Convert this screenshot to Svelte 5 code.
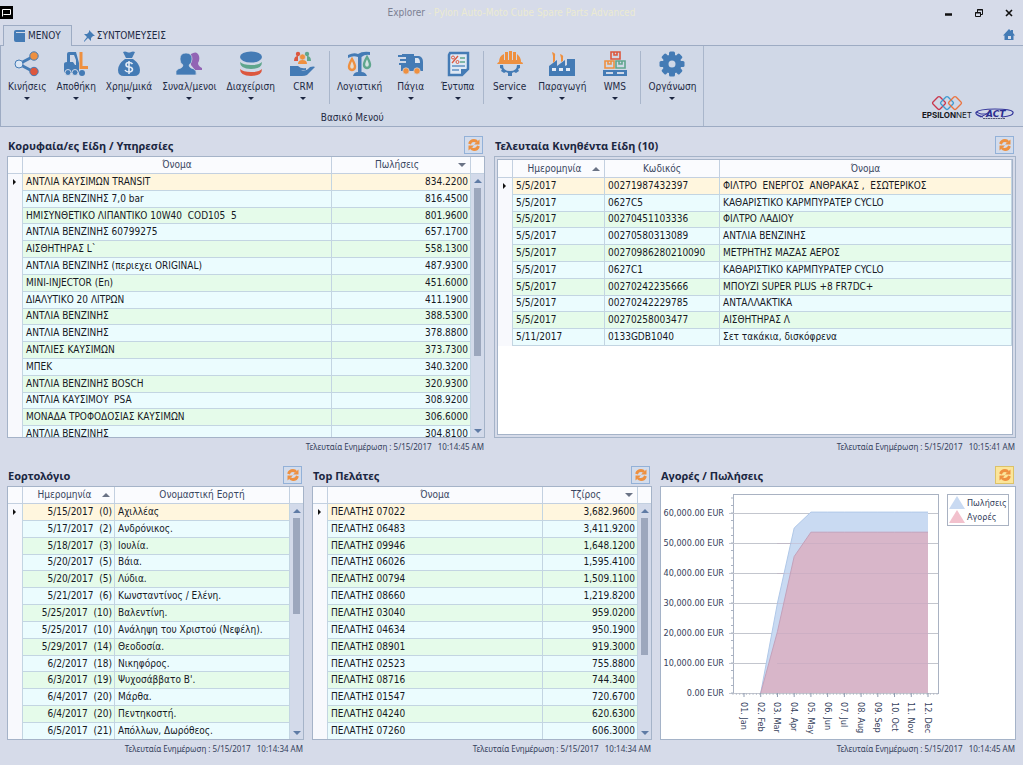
<script>
  const menu = [
    [
      { id: 'moves', label: 'Κινήσεις' },
      { id: 'forklift', label: 'Αποθήκη' },
      { id: 'money', label: 'Χρημ/μικά' },
      { id: 'people', label: 'Συναλ/μενοι' },
      { id: 'database', label: 'Διαχείριση' },
      { id: 'crm', label: 'CRM' }
    ],
    [
      { id: 'scales', label: 'Λογιστική' },
      { id: 'truck', label: 'Πάγια' },
      { id: 'forms', label: 'Έντυπα' }
    ],
    [
      { id: 'service', label: 'Service' },
      { id: 'factory', label: 'Παραγωγή' },
      { id: 'wms', label: 'WMS' }
    ],
    [{ id: 'gear', label: 'Οργάνωση' }]
  ];

  const panels = {
    items: {
      title: 'Κορυφαία/ες Είδη / Υπηρεσίες',
      stamp: '5/15/2017   10:14:45 AM',
      thumb: 71,
      cols: [
        { name: 'Όνομα', cls: '' },
        { name: 'Πωλήσεις', cls: 'c-sales', align: 'num', sort: 'down' }
      ],
      rows: [
        ['ΑΝΤΛΙΑ ΚΑΥΣΙΜΩΝ TRANSIT', '834.2200'],
        ['ΑΝΤΛΙΑ ΒΕΝΖΙΝΗΣ 7,0 bar', '816.4500'],
        ['ΗΜΙΣΥΝΘΕΤΙΚΟ ΛΙΠΑΝΤΙΚΟ 10W40  COD105  5', '801.9600'],
        ['ΑΝΤΛΙΑ ΒΕΝΖΙΝΗΣ 60799275', '657.1700'],
        ['ΑΙΣΘΗΤΗΡΑΣ L`', '558.1300'],
        ['ΑΝΤΛΙΑ ΒΕΝΖΙΝΗΣ (περιεχει ORIGINAL)', '487.9300'],
        ['MINI-INJECTOR (En)', '451.6000'],
        ['ΔΙΑΛΥΤΙΚΟ 20 ΛΙΤΡΩΝ', '411.1900'],
        ['ΑΝΤΛΙΑ ΒΕΝΖΙΝΗΣ', '388.5300'],
        ['ΑΝΤΛΙΑ ΒΕΝΖΙΝΗΣ', '378.8800'],
        ['ΑΝΤΛΙΕΣ ΚΑΥΣΙΜΩΝ', '373.7300'],
        ['ΜΠΕΚ', '340.3200'],
        ['ΑΝΤΛΙΑ ΒΕΝΖΙΝΗΣ BOSCH', '320.9300'],
        ['ΑΝΤΛΙΑ ΚΑΥΣΙΜΟΥ  PSA', '308.9200'],
        ['ΜΟΝΑΔΑ ΤΡΟΦΟΔΟΣΙΑΣ ΚΑΥΣΙΜΩΝ', '306.6000'],
        ['ΑΝΤΛΙΑ ΒΕΝΖΙΝΗΣ', '304.8100']
      ]
    },
    recent: {
      title: 'Τελευταία Κινηθέντα Είδη (10)',
      stamp: '5/15/2017   10:15:41 AM',
      cols: [
        { name: 'Ημερομηνία', cls: 'c-date', sort: 'up' },
        { name: 'Κωδικός', cls: 'c-code' },
        { name: 'Όνομα', cls: '' }
      ],
      rows: [
        ['5/5/2017', '00271987432397', 'ΦΙΛΤΡΟ  ΕΝΕΡΓΟΣ  ΑΝΘΡΑΚΑΣ ,  ΕΣΩΤΕΡΙΚΟΣ'],
        ['5/5/2017', '0627C5', 'ΚΑΘΑΡΙΣΤΙΚΟ ΚΑΡΜΠΥΡΑΤΕΡ CYCLO'],
        ['5/5/2017', '00270451103336', 'ΦΙΛΤΡΟ ΛΑΔΙΟΥ'],
        ['5/5/2017', '00270580313089', 'ΑΝΤΛΙΑ ΒΕΝΖΙΝΗΣ'],
        ['5/5/2017', '00270986280210090', 'ΜΕΤΡΗΤΗΣ ΜΑΖΑΣ ΑΕΡΟΣ'],
        ['5/5/2017', '0627C1', 'ΚΑΘΑΡΙΣΤΙΚΟ ΚΑΡΜΠΥΡΑΤΕΡ CYCLO'],
        ['5/5/2017', '00270242235666', 'ΜΠΟΥΖΙ SUPER PLUS +8 FR7DC+'],
        ['5/5/2017', '00270242229785', 'ΑΝΤΑΛΛΑΚΤΙΚΑ'],
        ['5/5/2017', '00270258003477', 'ΑΙΣΘΗΤΗΡΑΣ Λ'],
        ['5/11/2017', '0133GDB1040', 'Σετ τακάκια, δισκόφρενα']
      ]
    },
    feasts: {
      title: 'Εορτολόγιο',
      stamp: '5/15/2017   10:14:34 AM',
      thumb: 46,
      cols: [
        { name: 'Ημερομηνία', cls: 'c-date', align: 'num', sort: 'up' },
        { name: 'Ονομαστική Εορτή', cls: '' }
      ],
      rows: [
        ['5/15/2017  (0)', 'Αχιλλέας'],
        ['5/17/2017  (2)', 'Ανδρόνικος.'],
        ['5/18/2017  (3)', 'Ιουλία.'],
        ['5/20/2017  (5)', 'Βάια.'],
        ['5/20/2017  (5)', 'Λύδια.'],
        ['5/21/2017  (6)', 'Κωνσταντίνος / Ελένη.'],
        ['5/25/2017  (10)', 'Βαλεντίνη.'],
        ['5/25/2017  (10)', 'Ανάληψη του Χριστού (Νεφέλη).'],
        ['5/29/2017  (14)', 'Θεοδοσία.'],
        ['6/2/2017  (18)', 'Νικηφόρος.'],
        ['6/3/2017  (19)', "Ψυχοσάββατο Β'."],
        ['6/4/2017  (20)', 'Μάρθα.'],
        ['6/4/2017  (20)', 'Πεντηκοστή.'],
        ['6/5/2017  (21)', 'Απόλλων, Δωρόθεος.']
      ]
    },
    clients: {
      title: 'Top Πελάτες',
      stamp: '5/15/2017   10:14:34 AM',
      thumb: 66,
      cols: [
        { name: 'Όνομα', cls: '' },
        { name: 'Τζίρος', cls: 'c-turn', align: 'num', sort: 'down' }
      ],
      rows: [
        ['ΠΕΛΑΤΗΣ 07022', '3,682.9600'],
        ['ΠΕΛΑΤΗΣ 06483', '3,411.9200'],
        ['ΠΕΛΑΤΗΣ 09946', '1,648.1200'],
        ['ΠΕΛΑΤΗΣ 06026', '1,595.4100'],
        ['ΠΕΛΑΤΗΣ 00794', '1,509.1100'],
        ['ΠΕΛΑΤΗΣ 08660', '1,219.8200'],
        ['ΠΕΛΑΤΗΣ 03040', '959.0200'],
        ['ΠΕΛΑΤΗΣ 04634', '950.1900'],
        ['ΠΕΛΑΤΗΣ 08901', '919.3000'],
        ['ΠΕΛΑΤΗΣ 02523', '755.8800'],
        ['ΠΕΛΑΤΗΣ 08716', '744.3400'],
        ['ΠΕΛΑΤΗΣ 01547', '720.6700'],
        ['ΠΕΛΑΤΗΣ 04240', '620.6300'],
        ['ΠΕΛΑΤΗΣ 07260', '606.3000']
      ]
    }
  };

  const months = ['01. Jan', '02. Feb', '03. Mar', '04. Apr', '05. May', '06. Jun', '07. Jul', '08. Aug', '09. Sep', '10. Oct', '11. Nov', '12. Dec'];
  const sales = [0, 0, 30000, 55000, 60300, 60300, 60300, 60300, 60300, 60300, 60300, 60300];
  const buys = [0, 0, 20500, 45500, 53600, 53600, 53600, 53600, 53600, 53600, 53600, 53600];
  const ticks = [0, 10000, 20000, 30000, 40000, 50000, 60000];
  const plot = { left: 72, right: 277, top: 7, base: 206 };
  const mx = (i) => 83 + (i * 184) / 11;
  const vy = (v) => plot.base - (v * 180) / 60000;
  const line = (vals) => vals.slice(1).map((v, i) => `${mx(i + 1)},${vy(v)}`).join(' ');
  const area = (vals) => `${line(vals)} ${mx(11)},${plot.base}`;
  const money = (v) => `${v.toLocaleString('en-US', { minimumFractionDigits: 2 })} EUR`;
  const teeth = [0, 45, 90, 135, 180, 225, 270, 315];
</script>

{#snippet icon(id)}
  <svg class="icon" viewBox="0 0 26 26" aria-hidden="true">
    {#if id === 'moves'}
      <path d="M20 5 5 13l15 8" fill="none" stroke="#447bb5" stroke-width="3" />
      <circle cx="5" cy="13" r="4" fill="#dbe6f4" stroke="#447bb5" />
      <circle cx="20" cy="5" r="4.2" fill="#ee9040" stroke="#447bb5" />
      <circle cx="20" cy="20.5" r="4.2" fill="#dc573e" stroke="#447bb5" />
    {:else if id === 'forklift'}
      <path d="M4 11V3q0-2 2-2h7l3 11v8q0 2-2 2H3q-2 0-2-2v-7q0-2 3-2zm3-7v7h3l2 3h1V9l-2-5z" fill="#447bb5" fill-rule="evenodd" />
      <circle cx="5" cy="21.5" r="3" fill="#447bb5" stroke="#d0d8e7" />
      <circle cx="12" cy="21.5" r="3" fill="#447bb5" stroke="#d0d8e7" />
      <circle cx="19" cy="22" r="3" fill="#447bb5" />
      <path d="M18 1v15.500h7" fill="none" stroke="#ee9040" stroke-width="3" />
    {:else if id === 'money'}
      <path d="M7 1q2-1 4 0t4 0 4 0l-3 6h-6zM9 8h8q7 5 7 11 0 6-6 6H8q-6 0-6-6 0-6 7-11z" fill="#447bb5" />
      <path d="M16.500 13q-1-1.500-3.500-1.500-3 0-3 2.200 0 2 3 2.300 3.500.3 3.500 2.500T13 21q-3 0-4-2M13 10v13" fill="none" stroke="#e3ebf6" stroke-width="1.600" />
    {:else if id === 'people'}
      <path d="M15 3q6-4 8 2 1 4-1 7 0 3 4 5 1 2 0 2h-7l-4-5z" fill="#9264b4" />
      <path d="M10 2q6 0 6 6 0 4-3 6 0 3 5 4 3 2 2 6H0q-1-4 2-6 5-1 5-4-3-2-3-6 0-6 6-6z" fill="#447bb5" stroke="#d0d8e7" stroke-width=".7" />
    {:else if id === 'database'}
      <path d="M2 18q0 7 11 7t11-7q-3 3-11 3T2 18z" fill="#dc573e" />
      <path d="M2 11q0 7 11 7t11-7q-3 3-11 3T2 11z" fill="#5fa68d" />
      <ellipse cx="13" cy="6" rx="11" ry="5.5" fill="#447bb5" />
    {:else if id === 'crm'}
      <circle cx="8" cy="3" r="2.2" fill="#dc573e" /><path d="M4 10q0-5 4-5v5z" fill="#dc573e" />
      <circle cx="17" cy="3" r="2.2" fill="#5fa68d" /><path d="M21 10q0-5-4-5v5z" fill="#5fa68d" />
      <circle cx="12.5" cy="6" r="3" fill="#ee9040" stroke="#d0d8e7" stroke-width=".6" /><path d="M8 13q0-4 4.500-4t4.500 4z" fill="#ee9040" />
      <path d="M0 15h8q3 3 8 2v2h-5q5 2 9-3 4-1 5 0l-8 8q-2 1-5 1H0z" fill="#447bb5" />
    {:else if id === 'scales'}
      <path d="M1 4q6-3 10-1 4-3 12-2v3q-5-1-8.500 2v15q4 0 5.500 4H6q1-4 5-4V6Q6 4 1 7z" fill="#447bb5" />
      <path d="M5 8q-6 10 0 11 6-1 0-11z" fill="#e6dccf" stroke="#ee9040" stroke-width="2.400" />
      <path d="M20 6q-6 10 0 11 6-1 0-11z" fill="#d4e3e2" stroke="#5fa68d" stroke-width="2.400" />
    {:else if id === 'truck'}
      <path d="M4 3h12v2h5q4 1 4 6v9H3v-6H1v-2h7v-2H2V8h6V6H0V4h4z" fill="#447bb5" />
      <path d="M17 7h3q2 1 2 5h-5z" fill="#d9e3f0" />
      <circle cx="8" cy="20" r="3.2" fill="#ee9040" stroke="#d0d8e7" stroke-width=".7" /><circle cx="19" cy="20" r="3.2" fill="#ee9040" stroke="#d0d8e7" stroke-width=".7" />
    {:else if id === 'forms'}
      <path d="M5 2h18v16l-6 6H4V4z" fill="#dfe8f4" stroke="#447bb5" stroke-width="2.500" /><path d="M16 25v-7h8z" fill="#447bb5" />
      <path d="M7 12l6-7" stroke="#dc573e" stroke-width="1.300" /><circle cx="8" cy="6.5" r="1.500" fill="none" stroke="#dc573e" /><circle cx="12.5" cy="11" r="1.500" fill="none" stroke="#dc573e" />
      <path d="M15 7h5M15 11h5" stroke="#5fa68d" stroke-width="1.500" /><path d="M7 15h13M7 19h7" stroke="#5f90c4" stroke-width="1.500" />
    {:else if id === 'service'}
      <path d="M3 14h3q0 6 7 6t7-6h3v3l-2 1 1 2-3 2-2-1-2 1v3h-4v-3l-2-1-2 1-3-2 1-2-2-1z" fill="#447bb5" />
      <path d="M0 13q1-2 2-2Q2 5 7 3v6h1V1h3v8h1V0h3v9h1V1h3v8h1V3q4 3 4 8 2 0 2 2z" fill="#ee9040" />
    {:else if id === 'factory'}
      <path d="M0 25V15l8-6v6l8-6v6l2-1V8h8v17z" fill="#447bb5" />
      <path d="M3 17h4v3H3zM10 17h4v3h-4zM17 17h4v3h-4z" fill="#e3ebf6" />
      <path d="M4 12V5L3 1q4 1 3 4v5zM12 11V7l-1-4q4 1 3 4v3z" fill="#ee9040" />
    {:else if id === 'wms'}
      <path d="M9 1h9v7H9zM12 1v3h3V1" fill="none" stroke="#dc573e" stroke-width="1.600" />
      <path d="M3 10h9v7H3zM6 10v3h3v-3" fill="none" stroke="#ee9040" stroke-width="1.600" />
      <path d="M14 10h9v7h-9zM17 10v3h3v-3" fill="none" stroke="#5fa68d" stroke-width="1.600" />
      <path d="M1 19h24v2H1zM1 23h24v2H1zM1 21h3v2H1zM11 21h4v2h-4zM22 21h3v2h-3z" fill="#447bb5" />
    {:else if id === 'gear'}
      {#each teeth as a}
        <rect x="10" y="0.5" width="6" height="7" rx="1.5" fill="#447bb5" transform="rotate({a} 13 13)" />
      {/each}
      <circle cx="13" cy="13" r="6.5" fill="none" stroke="#447bb5" stroke-width="6" />
    {/if}
  </svg>
{/snippet}

{#snippet heading(title, hot)}
  <header class="panel-head">
    <h2>{title}</h2>
    <button class="refresh" class:hot aria-label="Ανανέωση">
      <svg viewBox="0 0 14 14" aria-hidden="true">
        <path d="M2.500 6q1-3.500 4.500-3.500 2 0 3 1.500M11.500 8q-1 3.500-4.500 3.500-2 0-3-1.500" fill="none" stroke="#ee9040" stroke-width="2.800" />
        <path d="M12.500 1.500v5H7zM1.500 12.500v-5H7z" fill="#ee9040" />
      </svg>
    </button>
  </header>
{/snippet}

{#snippet grid(p, framed)}
  <section class="panel">
    {@render heading(p.title, false)}
    <div class="frame" class:framed>
      <div class="sheet">
        <table class:short={p.rows.length === 10} class:mid={p.rows.length === 14} class:long={p.rows.length === 16}>
          <thead>
            <tr>
              <th class="gutter"></th>
              {#each p.cols as c}
                <th class={c.cls}>
                  <div class="th"><span>{c.name}</span>{#if c.sort}<i class="tri {c.sort}"></i>{/if}</div>
                </th>
              {/each}
            </tr>
          </thead>
          <tbody>
            {#each p.rows as row, r}
              <tr>
                <td class="gutter">{#if r === 0}<i class="current"></i>{/if}</td>
                {#each row as cell, c}
                  <td class={p.cols[c].align}>{cell}</td>
                {/each}
              </tr>
            {/each}
          </tbody>
        </table>
      </div>
      {#if p.thumb}
        <div class="scroll">
          <div class="cap"></div>
          <i class="tri up"></i>
          <div class="track"><div class="thumb" style="height: {p.thumb}%"></div></div>
          <i class="tri down"></i>
        </div>
      {/if}
    </div>
    <footer>Τελευταία Ενημέρωση : {p.stamp}</footer>
  </section>
{/snippet}

<div class="app">
  <div class="titlebar">
    <svg class="appicon" viewBox="0 0 13 13" aria-hidden="true"><path d="M0 0h13v13H0z" /><path d="M2.500 10.500v-7h8v5h-7" fill="none" stroke="#fff" /></svg>
    <h1>Explorer <span>- Pylon Auto-Moto Cube Spare Parts Advanced</span></h1>
    <div class="winbtns">
      <button aria-label="Ελαχιστοποίηση"><svg viewBox="0 0 10 10"><path d="M1 6.500h7" stroke="#111" stroke-width="2.500" /></svg></button>
      <button aria-label="Επαναφορά"><svg viewBox="0 0 10 10"><path d="M1.500 4.500h5v4h-5zM3.500 4V1.500h5v5H7M3 2h6M1 5h6" fill="none" stroke="#111" /></svg></button>
      <button aria-label="Κλείσιμο"><svg viewBox="0 0 10 10"><path d="M2 2l6 6M8 2L2 8" stroke="#111" stroke-width="1.600" /></svg></button>
    </div>
  </div>

  <nav class="tabs">
    <button class="tab active">
      <svg viewBox="0 0 12 12" aria-hidden="true"><path d="M2 0h9v2H2v1h9v9H2q-2 0-2-2V2q0-2 2-2z" fill="#447bb5" /></svg>ΜΕΝΟΥ
    </button>
    <button class="tab">
      <svg viewBox="0 0 12 12" aria-hidden="true"><path d="M6 0l6 6-2 0-2 2 0 3-3-3-4 4 0-1 3-4-3-3 3 0 2-2z" fill="#447bb5" /></svg>ΣΥΝΤΟΜΕΥΣΕΙΣ
    </button>
    <a class="home" href="#home" aria-label="Αρχική"><svg viewBox="0 0 12 12"><path d="M6 0l2 2V1h2v3l2 2.500h-1.500V11H1.500V6.500H0zM5 7v3h3V7z" fill="#447bb5" fill-rule="evenodd" /></svg></a>
  </nav>

  <div class="ribbon">
    <div class="menu">
      <div class="groups">
        {#each menu as group}
          <div class="group">
            {#each group as m}
              <button class="item">{@render icon(m.id)}<span>{m.label}</span><i class="tri down"></i></button>
            {/each}
          </div>
        {/each}
      </div>
      <div class="caption">Βασικό Μενού</div>
    </div>
    <div class="logos">
      <div class="epsilon">
        <svg viewBox="0 0 34 16" aria-hidden="true">
          <g fill="none" stroke-width="1.300">
            <rect x="4" y="3" width="10" height="10" rx="1.5" transform="rotate(45 9 8)" stroke="#c9364d" />
            <rect x="12" y="3" width="10" height="10" rx="1.5" transform="rotate(45 17 8)" stroke="#3f9bd0" />
            <rect x="20" y="3" width="10" height="10" rx="1.5" transform="rotate(45 25 8)" stroke="#ea7440" />
          </g>
        </svg>
        <div><b>EPSILON</b>NET</div>
      </div>
      <svg class="act" viewBox="0 0 40 12" aria-hidden="true">
        <path d="M8 9Q0 7 1 4.500 4 1 20 1t18 3q1 4-11 5" fill="none" stroke="#35379c" stroke-width="1.200" />
        <path d="M1 4q4 3 12 2M5 9q4-1 9-5" fill="none" stroke="#35379c" />
        <text x="11" y="9">ACT</text>
        <path d="M8 10.500h22" stroke="#555a78" stroke-dasharray="2 .5" />
      </svg>
    </div>
  </div>

  <main>
    <div class="row top">
      {@render grid(panels.items, false)}
      {@render grid(panels.recent, true)}
    </div>
    <div class="row bottom">
      {@render grid(panels.feasts, false)}
      {@render grid(panels.clients, false)}
      <section class="panel">
        {@render heading('Αγορές / Πωλήσεις', true)}
        <div class="frame chart">
          <svg viewBox="0 0 354 252" preserveAspectRatio="xMinYMin meet" role="img" aria-label="Αγορές / Πωλήσεις">
            <rect x={plot.left} y={plot.top} width={plot.right - plot.left} height={plot.base - plot.top} fill="#fff" stroke="#a9b2c2" shape-rendering="crispEdges" />
            {#each ticks as t}
              <path d="M{plot.left - 4} {vy(t)}H{plot.right}" stroke="#c3c6ce" shape-rendering="crispEdges" />
              <text x="63" y={vy(t) + 3} text-anchor="end">{money(t)}</text>
            {/each}
            {#each Array(27) as _, i}
              <path d="M{plot.left - 2} {plot.base - i * 7.5}h2" stroke="#a9b2c2" />
            {/each}
            {#each Array(62) as _, i}
              <path d="M{plot.left + i * 3.345} {plot.base}v2" stroke="#a9b2c2" stroke-width=".7" />
            {/each}
            <polygon points={area(sales)} fill="#c9daf2" />
            <polyline points={line(sales)} fill="none" stroke="#b0c8e8" />
            <polygon points={area(buys)} fill="#d8b6c9" />
            <polyline points={line(buys)} fill="none" stroke="#c4a2bb" />
            {#each ticks.slice(1, 6) as t}
              <path d="M{mx(2)} {vy(t)}H{mx(11)}" stroke="#b9a4bb" stroke-opacity=".35" shape-rendering="crispEdges" />
            {/each}
            {#each months as m, i}
              <path d="M{mx(i)} {plot.base}v4" stroke="#8f9bb0" />
              <text transform="translate({mx(i) - 3} 215) rotate(90)">{m}</text>
            {/each}
            <rect x="286" y="7" width="61" height="31" fill="#fff" stroke="#a9b2c2" shape-rendering="crispEdges" />
            <path d="M288 22l8-13 8 13z" fill="#c9daf2" /><path d="M288 36l8-13 8 13z" fill="#f2c1cd" />
            <text x="306" y="19">Πωλήσεις</text><text x="306" y="33">Αγορές</text>
          </svg>
        </div>
        <footer>Τελευταία Ενημέρωση : 5/15/2017   10:14:45 AM</footer>
      </section>
    </div>
  </main>
</div>

<style>
  :global(body) { margin: 0; }
  .app {
    height: 100vh; display: flex; flex-direction: column; overflow: hidden;
    background: #d6dbe9; color: #1e2a44;
    font-family: "DejaVu Sans Condensed", "DejaVu Sans", "Noto Sans", sans-serif; font-size: 10px; line-height: 12px;
  }
  * { box-sizing: border-box; }
  button { font: inherit; color: inherit; background: none; border: 0; padding: 0; }
  svg { display: block; }
  h1, h2 { margin: 0; }

  .titlebar { height: 25px; flex: none; display: grid; grid-template-columns: 1fr auto 1fr; align-items: center; }
  .appicon { width: 13px; height: 13px; }
  h1 { font-size: 10px; font-weight: 400; color: #7b8092; white-space: nowrap; }
  h1 span { color: #ebead2; }
  .winbtns { justify-self: end; display: flex; gap: 20px; padding-right: 9px; }
  .winbtns svg { width: 10px; height: 10px; }

  .tabs { height: 21px; flex: none; display: flex; padding-left: 3px; border-bottom: 1px solid #9dabc3; }
  .tab { display: flex; align-items: center; gap: 2px; padding: 0 10px; height: 21px; border: 1px solid transparent; border-bottom: 0; white-space: nowrap; }
  .tab.active { background: #d0d8e7; border-color: #9dabc3; }
  .tab svg { width: 12px; height: 12px; }
  .home { margin-left: auto; padding: 4px 8px 0 0; }
  .home svg { width: 12px; height: 12px; }

  .ribbon { height: 81px; flex: none; display: flex; justify-content: space-between; background: #d0d8e7; border-bottom: 1px solid #9dabc3; border-left: 1px solid #9dabc3; }
  .menu { display: flex; flex-direction: column; border-right: 1px solid #a9b6cb; }
  .groups { display: flex; padding-top: 5px; }
  .group { display: flex; height: 53px; padding: 0 2px; }
  .group + .group { border-left: 1px solid #a9b6cb; }
  .item { display: flex; flex-direction: column; align-items: center; padding: 0 5px; min-width: 47px; white-space: nowrap; }
  .item span { margin-top: 4px; }
  .item .tri.down { margin-top: 4px; border-top-color: #1b2540; }
  .icon { width: 26px; height: 26px; }
  .caption { text-align: center; margin-top: 8px; }
  .logos { display: flex; align-items: flex-end; gap: 3px; padding: 0 8px 6px 0; }
  .epsilon { display: flex; flex-direction: column; align-items: center; font: 8px/9px Inter, sans-serif; color: #15171c; }
  .epsilon svg { width: 34px; height: 16px; }
  .act { width: 40px; height: 12px; }
  .act text { font: italic bold 9px "DejaVu Sans", sans-serif; fill: #2b2d8f; }

  .tri { display: block; width: 0; height: 0; border: 3px solid transparent; flex: none; }
  .tri.down { border-top: 3px solid #6a7385; border-bottom: 0; }
  .tri.up { border-bottom: 3px solid #6a7385; border-top: 0; }

  main { flex: 1; min-height: 0; display: grid; grid-template-rows: 320fr 292fr; gap: 10px; padding: 9px 7px 7px; }
  .row { display: grid; gap: 9px; min-height: 0; }
  .top { grid-template-columns: 478fr 522fr; }
  .bottom { grid-template-columns: 297fr 340fr 356fr; gap: 8px; }
  .panel { display: flex; flex-direction: column; min-width: 0; min-height: 0; }
  .panel-head { height: 20px; flex: none; display: flex; justify-content: space-between; align-items: flex-start; padding: 0 2px 0 1px; }
  h2 { font: bold 11px/20px "Noto Sans", sans-serif; color: #1b2742; white-space: nowrap; }
  .refresh { width: 19px; height: 18px; border: 1px solid #93b1d8; background: #d3dcec; display: grid; place-items: center; }
  .refresh svg { width: 14px; height: 14px; }
  .refresh.hot { background: #fbe59a; border-color: #dcc268; }
  .frame { flex: 1; min-height: 0; display: flex; background: #fff; border: 1px solid #a5b3c8; }
  .framed { padding: 3px; box-shadow: inset 0 0 0 2px #d6dbe9, inset 0 0 0 3px #a5b3c8; }
  .sheet { flex: 1; min-width: 0; overflow: hidden; }
  footer { height: 18px; flex: none; text-align: right; white-space: pre; font: 8px/18px "Noto Sans", sans-serif; color: #35415c; padding-right: 1px; }

  table { width: 100%; border-collapse: separate; border-spacing: 0; table-layout: fixed; }
  .short { height: 186px; }
  .mid { height: 253px; }
  .long { height: 286px; }
  th { height: 17px; padding: 0; font-weight: 400; color: #39465f; background: #fafbfe; border-right: 1px solid #c3d0e0; border-bottom: 1px solid #c3d0e0; }
  .short th { height: 18px; }
  .th { display: flex; align-items: center; padding: 0 4px; }
  .th span { flex: 1; }
  .th .tri { border-left-width: 4px; border-right-width: 4px; }
  .th .tri.down { border-top-width: 4px; }
  .th .tri.up { border-bottom-width: 4px; }
  td { padding: 0 3px; white-space: pre; overflow: hidden; color: #15181f; border-right: 1px solid #c3d5e2; border-bottom: 1px solid #c3d5e2; background: #ebfcfe; }
  tbody tr:nth-child(odd) td { background: #e5fbea; }
  tbody tr:first-child td { background: #fff6de; }
  tbody tr td.gutter { background: #f8f9fd; border-bottom: 0; }
  .gutter { width: 15px; padding: 0 5px; }
  .current { display: block; width: 0; height: 0; border: 3px solid transparent; border-left-color: #111; border-right: 0; }
  .num { text-align: right; padding-right: 2px; }
  .c-sales { width: 139px; }
  .c-date { width: 92px; }
  .c-code { width: 115px; }
  .c-turn { width: 95px; }

  .scroll { width: 13px; flex: none; display: flex; flex-direction: column; align-items: center; background: #d3daea; padding-bottom: 4px; }
  .cap { width: 100%; height: 17px; background: #fafbfe; border-bottom: 1px solid #c3d0e0; }
  .scroll .tri { border-width: 4px; border-top-color: transparent; margin: 5px 0; }
  .scroll .tri.up { border-top-width: 0; border-bottom-color: #5f7ba5; }
  .scroll .tri.down { border-bottom-width: 0; border-top-color: #5f7ba5; margin-bottom: 0; }
  .track { flex: 1; width: 7px; }
  .thumb { background: #9ca7bd; }

  .chart svg { width: 100%; height: 100%; }
  .chart text { font-size: 9px; fill: #35415c; }
</style>
